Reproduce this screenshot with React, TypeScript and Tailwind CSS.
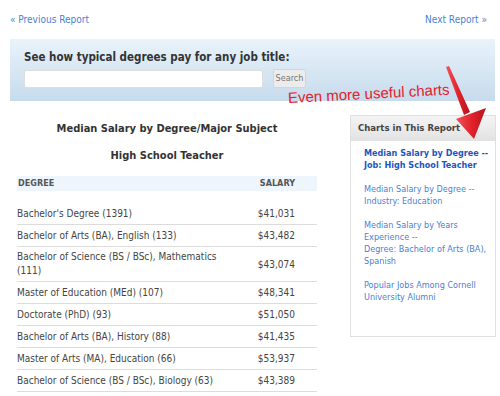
import React from "react";

const ROWS = [
  { degree: "Bachelor's Degree (1391)", salary: "$41,031" },
  { degree: "Bachelor of Arts (BA), English (133)", salary: "$43,482" },
  { degree: "Bachelor of Science (BS / BSc), Mathematics (111)", salary: "$43,074" },
  { degree: "Master of Education (MEd) (107)", salary: "$48,341" },
  { degree: "Doctorate (PhD) (93)", salary: "$51,050" },
  { degree: "Bachelor of Arts (BA), History (88)", salary: "$41,435" },
  { degree: "Master of Arts (MA), Education (66)", salary: "$53,937" },
  { degree: "Bachelor of Science (BS / BSc), Biology (63)", salary: "$43,389" },
];

const CHARTS = [
  { lines: ["Median Salary by Degree --", "Job: High School Teacher"], active: true },
  { lines: ["Median Salary by Degree --", "Industry: Education"], active: false },
  {
    lines: ["Median Salary by Years", "Experience --", "Degree: Bachelor of Arts (BA),", "Spanish"],
    active: false,
  },
  { lines: ["Popular Jobs Among Cornell", "University Alumni"], active: false },
];

const font = "font-['Tahoma','DejaVu_Sans_Condensed','DejaVu_Sans',sans-serif]";

function RedArrow() {
  return (
    <svg className="absolute left-[440px] top-[62px]" width="52" height="82" viewBox="0 0 52 82">
      <defs>
        <linearGradient id="arrowFill" x1="0" y1="0" x2="1" y2="0">
          <stop offset="0" stopColor="#f2545a" />
          <stop offset="0.5" stopColor="#e3232c" />
          <stop offset="1" stopColor="#b5141c" />
        </linearGradient>
      </defs>
      <polygon points="6,5 9,4 30,50 24,53" fill="url(#arrowFill)" />
      <polygon points="16,57 46,46 34,77" fill="url(#arrowFill)" />
    </svg>
  );
}

export default function App() {
  return (
    <div className={`relative h-[396px] w-[500px] overflow-hidden bg-white text-[#444] ${font}`}>
      <div className="flex justify-between px-[10px] pt-[12px] text-[10px] text-[#4a7fd4]">
        <a>« Previous Report</a>
        <a className="pr-[3px]">Next Report »</a>
      </div>

      <div className="ml-[10px] mr-[5px] mt-[12px] h-[62px] bg-gradient-to-b from-[#e9f3fb] to-[#c6dbec] px-[14px] pt-[11px]">
        <div className="text-[11.5px] font-bold leading-[14px] text-[#333]">
          See how typical degrees pay for any job title:
        </div>
        <div className="mt-[5px] flex items-center gap-[10px]">
          <div className="h-[18px] w-[239px] rounded-[2px] border border-[#ddd] bg-white" />
          <button className="h-[19px] w-[33px] rounded-[2px] border border-[#d5d5d5] bg-[#ececec] text-[9px] text-[#777]">
            Search
          </button>
        </div>
      </div>

      <div className="flex">
        <div className="ml-[17px] w-[300px]">
          <div className="mt-[20px] text-center text-[11px] font-bold text-[#333]">
            Median Salary by Degree/Major Subject
          </div>
          <div className="mt-[10px] text-center text-[11px] font-bold text-[#333]">
            High School Teacher
          </div>
          <div className="mt-[12px] flex h-[15px] items-center justify-between bg-[#eef5fd] pl-[1px] pr-[22px] text-[9px] font-bold text-[#555]">
            <span>DEGREE</span>
            <span>SALARY</span>
          </div>
          <div className="mt-[12px] text-[10px] text-[#444]">
            {ROWS.map((row) => (
              <div
                key={row.degree}
                className="flex min-h-[22px] items-center justify-between border-b border-[#dcdcdc] py-[3px]"
              >
                <span className="w-[215px] leading-[14px]">{row.degree}</span>
                <span className="pr-[22px]">{row.salary}</span>
              </div>
            ))}
          </div>
        </div>

        <div className="ml-auto mr-[4px] mt-[14px] h-[222px] w-[146px] border border-[#e0e0e0] bg-white">
          <div className="flex h-[25px] items-center bg-gradient-to-b from-[#f4f4f4] to-[#e2e2e2] pl-[7px] text-[9.5px] font-bold text-[#444]">
            Charts in This Report
          </div>
          <div className="flex flex-col gap-[12px] pl-[13px] pt-[6px] text-[9px] leading-[12px]">
            {CHARTS.map((chart) => (
              <a
                key={chart.lines.join(" ")}
                className={chart.active ? "font-bold text-[#1e56be]" : "text-[#4a80d8]"}
              >
                {chart.lines.map((line) => (
                  <div key={line}>{line}</div>
                ))}
              </a>
            ))}
          </div>
        </div>
      </div>

      <div className="absolute left-[288px] top-[87px] origin-left -rotate-[3deg] font-['Liberation_Sans',sans-serif] text-[15px] text-[#e6202c]">
        Even more useful charts
      </div>
      <RedArrow />
    </div>
  );
}
